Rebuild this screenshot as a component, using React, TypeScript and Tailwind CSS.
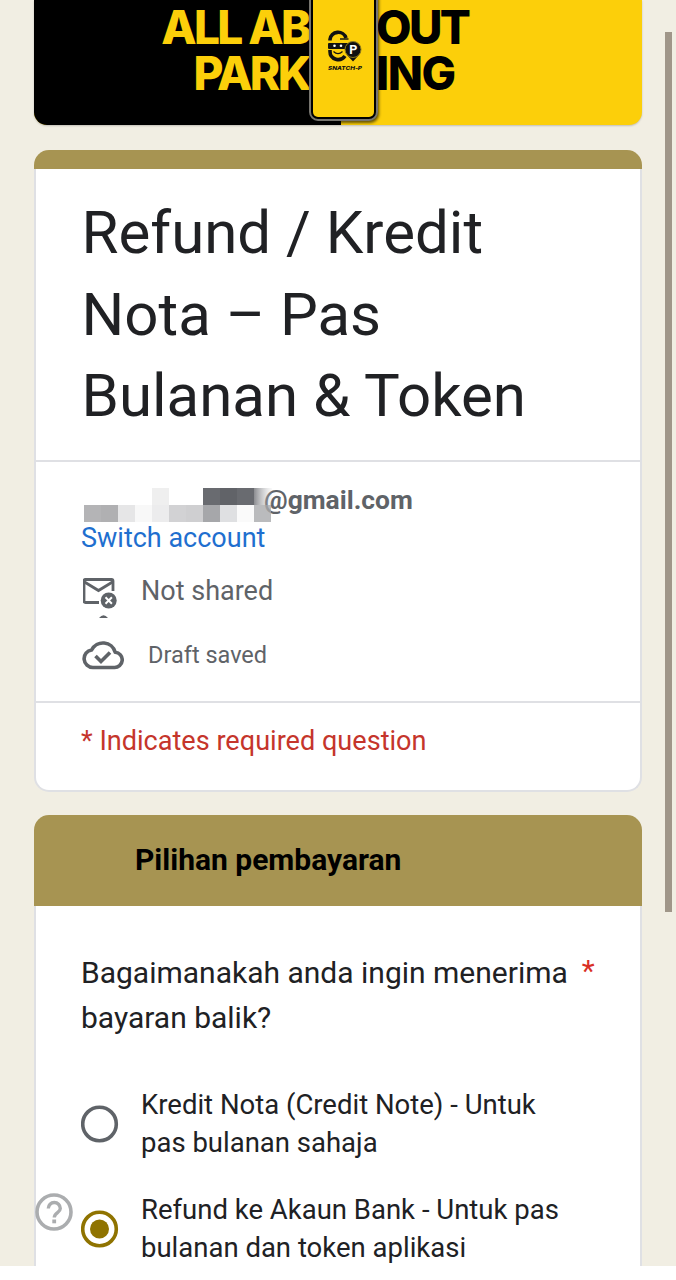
import React from 'react';

const options = [
  { lines: ['Kredit Nota (Credit Note) - Untuk', 'pas bulanan sahaja'], checked: false },
  { lines: ['Refund ke Akaun Bank - Untuk pas', 'bulanan dan token aplikasi'], checked: true },
];

// [column, row, colour] of every block that hides the account name
const blocks: [number, number, string][] = [
  [0, 1, '#b4b4b6'],
  [1, 1, '#b0b0b2'],
  [2, 1, '#e6e6e7'],
  [3, 1, '#f8f8f8'],
  [4, 0, '#efefef'],
  [4, 1, '#ececed'],
  [5, 1, '#d2d2d4'],
  [6, 1, '#cfcfd1'],
  [7, 0, '#696b70'],
  [8, 0, '#616368'],
  [9, 0, '#696b70'],
  [7, 1, '#a6a7aa'],
  [8, 1, '#dfe0e2'],
  [9, 1, '#fafafa'],
];

function Logo() {
  return (
    <svg className="absolute left-[16px] top-[29px]" width="36" height="44" viewBox="0 0 36 44">
      <path d="M2 11.500V10.500a8.200 8 0 0 1 16-1.500" fill="none" stroke="#111" strokeWidth="3.600" />
      <path d="M12 10h8.500" fill="none" stroke="#111" strokeWidth="1.400" />
      <rect y="14" width="20" height="6" rx="1" fill="#111" />
      <circle cx="6.500" cy="16.700" r="1.300" fill="#fff" />
      <circle cx="13" cy="16.700" r="1.300" fill="#fff" />
      <path d="M2 21v1.500a8.200 8 0 0 0 15 4.500" fill="none" stroke="#111" strokeWidth="3.600" />
      <path d="M5.500 22.500q4.500 4.500 9 0" fill="none" stroke="#111" strokeWidth="1.200" />
      <path d="M25 32.500l-5.500-6h11z" fill="#111" />
      <circle cx="25" cy="20.500" r="8" fill="#111" stroke="#8b7a20" strokeWidth="1" />
      <text x="25.300" y="25" textAnchor="middle" fontFamily="Roboto, sans-serif" fontSize="12.500" fontWeight="700" fill="#fff">P</text>
      <text x="0" y="41" fontFamily="Inter, sans-serif" fontSize="5.200" fontWeight="800" fontStyle="italic" textLength="34" lengthAdjust="spacingAndGlyphs" fill="#111">SNATCH-P</text>
    </svg>
  );
}

function Banner() {
  return (
    <div className="relative flex h-[125px] overflow-hidden rounded-b-[13px] bg-[#fccf0a] font-['Inter',sans-serif] text-[46px] leading-[46px] font-extrabold shadow-[0_1px_2px_#0003]">
      <div className="flex h-full w-[307px] flex-col items-end bg-black pt-[4px] pr-[32px] tracking-[-2.6px] whitespace-nowrap text-[#fccf0a]">
        <div>ALL AB</div>
        <div>PARK</div>
      </div>
      <div className="pt-[4px] pl-[35px] tracking-[-2.6px] text-black">
        <div>OUT</div>
        <div className="tracking-[-1.4px]">ING</div>
      </div>
      <div className="absolute -top-3 left-[275px] h-[133px] w-[69px] rounded-[9px] border-2 border-[#77756f] bg-black p-[2px] shadow-[1px_2px_3px_#0009]">
        <div className="h-full rounded-[5px] bg-[#fccf0a]" />
      </div>
      <div className="absolute left-[278px] top-0 h-[100px] w-[66px]">
        <Logo />
      </div>
    </div>
  );
}

function AccountSection() {
  return (
    <div className="h-[241px] border-b-2 border-[#dfe0e4] pt-[20px] pl-[45px] text-[27px] leading-[37.6px] text-[#5f6368]">
      <div className="relative flex h-[37.6px] pl-[183px] text-[26.4px] font-bold">
        <span>@gmail.com</span>
        <svg className="absolute left-[3px] top-[6px]" width="190" height="34" viewBox="0 0 190 34">
          <defs>
            <linearGradient id="fade">
              <stop offset="0" stopColor="#8b8c90" />
              <stop offset="1" stopColor="#c8c9cb" stopOpacity="0.1" />
            </linearGradient>
          </defs>
          {blocks.map(([col, row, fill]) => (
            <rect key={`${col}-${row}`} x={col * 17} y={row * 17} width="17" height="17" fill={fill} />
          ))}
          <rect x="170" width="18" height="17" fill="url(#fade)" />
          <rect x="170" y="17" width="17" height="17" fill="#a9aaad" fillOpacity="0.8" />
        </svg>
      </div>
      <div className="text-[#1f6fcf]">Switch account</div>
      <div className="mt-[16px] flex">
        <svg className="mt-[4px] ml-[2px] mr-[23px]" width="35" height="32" viewBox="0 0 35 32" fill="none" stroke="#5f6368">
          <path d="M16 25.500H2.500a1.500 1.500 0 0 1-1.500-1.500V4A1.500 1.500 0 0 1 2.500 2.500h26a1.500 1.500 0 0 1 1.500 1.500V14" strokeWidth="2.800" />
          <path d="M1.500 5l14 8.500 14-8.500" strokeWidth="2.800" />
          <circle cx="25.700" cy="23.500" r="8" fill="#5f6368" stroke="none" />
          <path d="M22.500 20.300l6.400 6.400M28.900 20.300l-6.400 6.400" stroke="#fff" strokeWidth="2" />
        </svg>
        <span>Not shared</span>
      </div>
      <svg className="ml-[18px] mt-[4px]" width="9" height="3" viewBox="0 0 9 3">
        <path d="M0 3q4.500-5.500 9 0z" fill="#5f6368" />
      </svg>
      <div className="mt-[19px] flex text-[23.500px]">
        <svg className="mt-[2px] ml-[1px] mr-[24px]" width="42" height="31" viewBox="0 0 42 31" fill="none" stroke="#5f6368" strokeWidth="3.600">
          <path d="M11 28.500h21a7.600 7.600 0 0 0 1.200-15.200A12.700 12.700 0 0 0 9.600 11 8.800 8.800 0 0 0 11 28.500z" strokeLinejoin="round" />
          <path d="M13.500 17l5.500 5.500 9-9" />
        </svg>
        <span>Draft saved</span>
      </div>
    </div>
  );
}

function Radio({ checked }: { checked: boolean }) {
  const color = checked ? '#8f7300' : '#5f6368';
  return (
    <svg width="38" height="38" viewBox="0 0 38 38">
      <circle cx="18.500" cy="19" r="16.800" fill="none" stroke={color} strokeWidth="3.600" />
      {checked && <circle cx="18.500" cy="19" r="9.500" fill={color} />}
    </svg>
  );
}

export default function App() {
  return (
    <div className="h-[1280px] w-[676px] bg-white">
      <div className="relative h-[1266px] overflow-hidden bg-[#f1eee3] pl-[34px] font-['Roboto',sans-serif] text-[#202124]">
        <div className="w-[608px]">
          <Banner />

          <section className="mt-[25px]">
            <div className="h-[19px] rounded-t-[15px] bg-[#a79452]" />
            <div className="h-[623px] rounded-b-[15px] border-2 border-t-0 border-[#dfe0e4] bg-white">
              <h1 className="h-[293px] border-b-2 border-[#dfe0e4] pt-[23px] pl-[45.5px] text-[60px] leading-[81.6px] whitespace-nowrap">
                Refund / Kredit
                <br />
                Nota – Pas
                <br />
                Bulanan &amp; Token
              </h1>
              <AccountSection />
              <div className="pt-[20px] pl-[45px] text-[27.100px] leading-[37.6px] text-[#c5352b]">
                * Indicates required question
              </div>
            </div>
          </section>

          <section className="mt-[23px]">
            <h2 className="h-[91px] rounded-t-[15px] bg-[#a79452] pl-[101px] text-[30px] leading-[90px] font-bold text-black">
              Pilihan pembayaran
            </h2>
            <div className="h-[400px] border-x-2 border-[#dfe0e4] bg-white pt-[44px] pl-[45px]">
              <div className="text-[30px] leading-[45px] whitespace-nowrap">
                Bagaimanakah anda ingin menerima<span className="ml-[14px] align-[2px] leading-none text-[#d93025]">*</span>
                <br />
                bayaran balik?
              </div>
              <div className="mt-[46px] space-y-[30px]">
                {options.map((option) => (
                  <div key={option.lines[0]} className="flex items-center gap-[22px] text-[27.500px] leading-[37.6px] whitespace-nowrap">
                    <Radio checked={option.checked} />
                    <div>
                      {option.lines.map((line) => (
                        <div key={line}>{line}</div>
                      ))}
                    </div>
                  </div>
                ))}
              </div>
            </div>
          </section>
        </div>

        <svg className="absolute left-[35px] top-[1193px]" width="38" height="38" viewBox="0 0 38 38" fill="none">
          <circle cx="19" cy="19" r="17" stroke="#abadaf" strokeWidth="3.600" />
          <path d="M13.300 15.500a6 6 0 0 1 12 0c0 4-6 4.200-6 9" stroke="#abadaf" strokeWidth="3.400" />
          <rect x="17.300" y="26.500" width="3.800" height="3.800" fill="#abadaf" />
        </svg>

        <div className="absolute left-[665px] top-[32px] h-[880px] w-[7px] bg-[#a09689]" />
      </div>
    </div>
  );
}
